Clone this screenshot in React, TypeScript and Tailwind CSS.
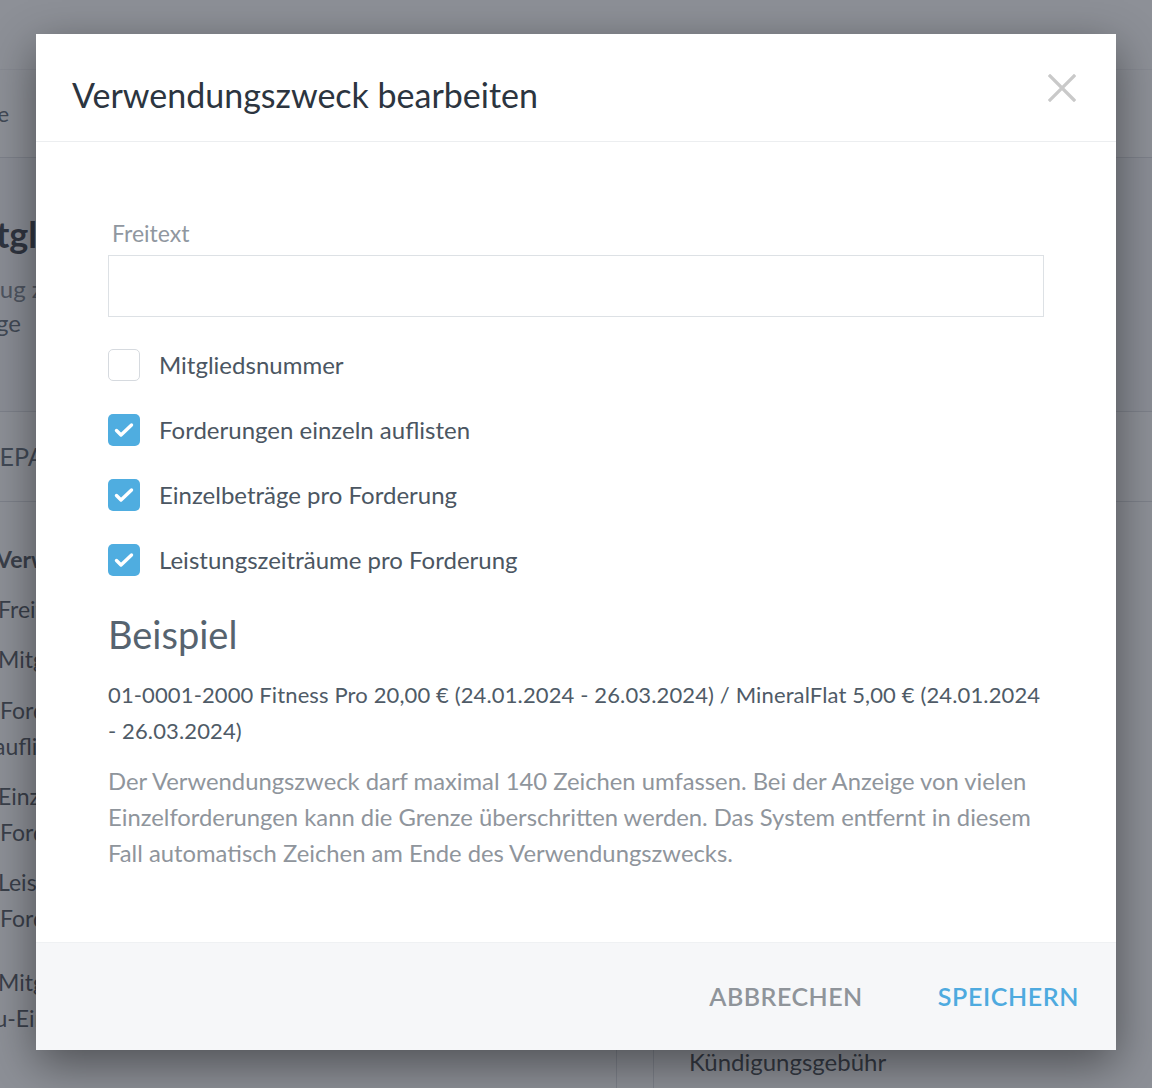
import React from 'react';

type CheckRowProps = {
  checked: boolean;
  label: string;
};

const CheckRow: React.FC<CheckRowProps> = ({ checked, label }) => (
  <label className="flex items-center gap-[19px] h-[32px]">
    {checked ? (
      <span className="w-[32px] h-[32px] rounded-[5px] bg-[#4fade0] flex items-center justify-center shrink-0">
        <svg viewBox="0 0 32 32" className="w-[32px] h-[32px]" fill="none">
          <path d="M8.5 16.5l4.5 4.5 10.5-10" stroke="#fff" strokeWidth="3.4" strokeLinecap="round" strokeLinejoin="round" />
        </svg>
      </span>
    ) : (
      <span className="w-[32px] h-[32px] rounded-[5px] border border-[#d6dadf] bg-white shrink-0" />
    )}
    <span className="text-[24px] leading-[30px] text-[#4b5662]">{label}</span>
  </label>
);

// page underneath the dialog
const PageBehind: React.FC = () => (
  <div className="w-full h-full bg-white flex flex-col">
    <div className="h-[70px] bg-white border-b border-[#f0f1f3]" />
    <div className="h-[88px] border-b border-[#d9dce0] flex items-center bg-white">
      <div className="w-[9px] flex justify-end whitespace-nowrap text-[22px] text-[#4b5662]">
        <span>Übersicht Profile</span>
      </div>
    </div>
    <div className="h-[254px] border-b border-[#d9dce0] bg-[#f7f8fa] flex flex-col pt-[52px] whitespace-nowrap">
      <span className="-ml-[47px] text-[36px] leading-[48px] font-bold text-[#1f2630]">Mitglieder</span>
      <span className="-ml-[39px] mt-[14px] text-[24px] leading-[34px] text-[#6b747e]">Bezug zu Verträgen</span>
      <div className="w-[21px] flex justify-end text-[24px] leading-[34px] text-[#4b5662]">
        <span>Anfrage</span>
      </div>
    </div>
    <div className="h-[90px] border-b border-[#d9dce0] flex items-center bg-white">
      <span className="-ml-[14px] text-[25px] text-[#4b5662]">SEPA Lastschrift</span>
    </div>
    <div className="flex flex-1">
      <div className="w-[617px] border-r border-[#d9dce0] flex flex-col pt-[40px] text-[23px] text-[#3a4049] whitespace-nowrap">
        <span className="-ml-[4px] leading-[34px] font-bold">Verwendungszweck</span>
        <span className="-ml-[2px] mt-[16px] leading-[34px]">Freitext</span>
        <span className="-ml-[2px] mt-[16px] leading-[34px]">Mitgliedsnummer</span>
        <span className="mt-[16px] leading-[36px]">Forderungen</span>
        <span className="-ml-[6px] leading-[36px]">auflisten</span>
        <span className="-ml-[2px] mt-[14px] leading-[36px]">Einzelbeträge</span>
        <span className="leading-[36px]">Forderung</span>
        <span className="-ml-[2px] mt-[14px] leading-[36px]">Leistungszeiträume</span>
        <span className="leading-[36px]">Forderung</span>
        <span className="-ml-[2px] mt-[28px] leading-[36px]">Mitgliedsnummer</span>
        <span className="-ml-[16px] leading-[36px]">zu-Einzug</span>
      </div>
      <div className="w-[37px] border-r border-[#d9dce0]" />
      <div className="flex-1 flex flex-col justify-end pl-[35px] pb-[11px]">
        <span className="text-[24px] leading-[30px] text-[#2f343b]">Kündigungsgebühr</span>
      </div>
    </div>
  </div>
);

const App: React.FC = () => {
  return (
    <div className="relative w-[1152px] h-[1088px] overflow-hidden font-['Lato','Liberation_Sans',sans-serif]">
      <PageBehind />

      <div className="absolute inset-0 bg-[rgba(58,64,76,0.58)] flex justify-center pt-[34px]">
        <div className="w-[1080px] h-[1016px] bg-white flex flex-col shadow-[0_14px_44px_rgba(0,0,0,0.45)]">
          {/* header */}
          <div className="h-[108px] border-b border-[#eceef0] px-[36px] pt-[39px] flex justify-between items-start shrink-0">
            <h2 className="text-[34px] leading-[44px] text-[#2c3540]">Verwendungszweck bearbeiten</h2>
            <button className="w-[28px] h-[28px] mt-[1px] mr-[4px] text-[#c9c9c9]">
              <svg viewBox="0 0 28 28" className="w-[28px] h-[28px]" fill="none" stroke="currentColor" strokeWidth="3.2" strokeLinecap="square">
                <path d="M2 2l24 24M26 2L2 26" />
              </svg>
            </button>
          </div>

          {/* body */}
          <div className="flex-1 px-[72px] pt-[76px]">
            <label className="block text-[23px] leading-[30px] text-[#9097a0] pl-[4px]">Freitext</label>
            <input className="mt-[7px] w-full h-[62px] border border-[#dde1e5] outline-none px-[12px] text-[22px]" />

            <div className="mt-[32px] flex flex-col gap-[33px]">
              <CheckRow checked={false} label="Mitgliedsnummer" />
              <CheckRow checked label="Forderungen einzeln auflisten" />
              <CheckRow checked label="Einzelbeträge pro Forderung" />
              <CheckRow checked label="Leistungszeiträume pro Forderung" />
            </div>

            <h3 className="mt-[35px] text-[38px] leading-[46px] text-[#56636f]">Beispiel</h3>
            <p className="mt-[20px] text-[22px] leading-[36px] tracking-[0.13px] text-[#4f5b67]">
              01-0001-2000 Fitness Pro 20,00 € (24.01.2024 - 26.03.2024) / MineralFlat 5,00 € (24.01.2024 - 26.03.2024)
            </p>
            <p className="mt-[14px] text-[23.8px] leading-[36px] text-[#8f959c]">
              Der Verwendungszweck darf maximal 140 Zeichen umfassen. Bei der Anzeige von vielen Einzelforderungen kann die Grenze überschritten werden. Das System entfernt in diesem Fall automatisch Zeichen am Ende des Verwendungszwecks.
            </p>
          </div>

          {/* footer */}
          <div className="h-[108px] bg-[#f6f7f9] border-t border-[#eff1f3] flex items-center justify-end gap-[75px] pr-[37px] shrink-0">
            <button className="text-[25px] font-semibold tracking-[0.5px] text-[#8f949a]">ABBRECHEN</button>
            <button className="text-[25px] font-semibold tracking-[0.6px] text-[#4eaadf]">SPEICHERN</button>
          </div>
        </div>
      </div>
    </div>
  );
};

export default App;
